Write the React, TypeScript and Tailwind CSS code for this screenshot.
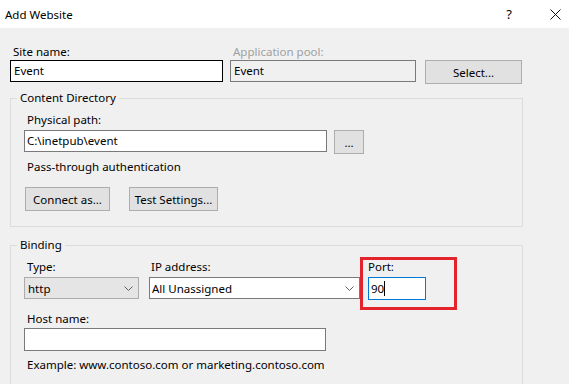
import React from 'react';

function Chevron() {
  return (
    <svg width="9" height="5" viewBox="0 0 9 5" fill="none" stroke="#606060" strokeWidth="1">
      <path d="M0.5 0.5 L4.5 4.5 L8.5 0.5" />
    </svg>
  );
}

function Button({ label, className }: { label: string; className: string }) {
  return (
    <div className={`h-[24px] bg-[#e1e1e1] border border-[#adadad] flex items-center justify-center ${className}`}>
      {label}
    </div>
  );
}

export default function App() {
  return (
    <div
      className="w-[569px] h-[384px] overflow-hidden flex flex-col bg-[#f0f0f0] text-black text-[11.5px] leading-[17px]"
      style={{ fontFamily: '"Noto Sans", "Open Sans", sans-serif' }}
    >
      {/* Title bar */}
      <div className="h-[28px] bg-white flex items-center pl-[5px] shrink-0">
        <span>Add Website</span>
        <span className="ml-auto text-[13px]">?</span>
        <svg className="ml-[38px] mr-[8px]" width="11" height="11" viewBox="0 0 11 11" stroke="#111" strokeWidth="1">
          <path d="M0.5 0.5 L10.5 10.5 M10.5 0.5 L0.5 10.5" />
        </svg>
      </div>

      <div className="pl-[10px] pt-[15px] w-[523px]">
        {/* Site name / app pool */}
        <div className="flex items-start">
          <div className="w-[213px]">
            <div className="h-[17px] pl-[3px]">Site name:</div>
            <div className="h-[22px] bg-white border border-black pl-[3px] leading-[20px]">Event</div>
          </div>
          <div className="w-[186px] ml-[7px]">
            <div className="h-[17px] pl-[3px] text-[#a0a0a0]">Application pool:</div>
            <div className="h-[22px] border border-[#7a7a7a] pl-[3px] leading-[20px]">Event</div>
          </div>
          <Button label="Select..." className="w-[97px] ml-[9px] mt-[17px]" />
        </div>

        {/* Content Directory */}
        <fieldset className="mt-[6px] border border-[#dcdcdc] px-[13px] pb-[15px]">
          <legend className="ml-[-7px] px-[3px] leading-[16px]">Content Directory</legend>
          <div className="mt-[5px] h-[17px] pl-[3px]">Physical path:</div>
          <div className="mt-[2px] flex items-start">
            <div className="w-[303px] h-[22px] bg-white border border-[#7a7a7a] pl-[2px] leading-[20px]">C:\inetpub\event</div>
            <Button label="..." className="w-[30px] ml-[7px]" />
          </div>
          <div className="mt-[4px] h-[17px] pl-[3px]">Pass-through authentication</div>
          <div className="mt-[12px] flex ml-[1px]">
            <Button label="Connect as..." className="w-[85px]" />
            <Button label="Test Settings..." className="w-[89px] ml-[19px]" />
          </div>
        </fieldset>

        {/* Binding */}
        <fieldset className="mt-[10px] border border-[#dcdcdc] border-b-0 px-[13px] pb-[20px]">
          <legend className="ml-[-7px] px-[3px] leading-[16px]">Binding</legend>
          <div className="mt-[5px] flex items-start">
            <div className="w-[115px]">
              <div className="h-[17px] pl-[3px]">Type:</div>
              <div className="mt-[2px] h-[22px] bg-[#e5e5e5] border border-[#acacac] flex items-center pl-[3px] pr-[5px]">
                <span>http</span>
                <span className="ml-auto"><Chevron /></span>
              </div>
            </div>
            <div className="w-[211px] ml-[10px]">
              <div className="h-[17px] pl-[2px]">IP address:</div>
              <div className="mt-[2px] h-[22px] bg-white border border-[#7a7a7a] flex items-center pl-[2px] pr-[5px]">
                <span>All Unassigned</span>
                <span className="ml-auto"><Chevron /></span>
              </div>
            </div>
            <div className="w-[58px] ml-[8px] relative">
              <div className="h-[17px]">Port:</div>
              <div className="mt-[2px] h-[23px] bg-white border border-[#0078d7] flex items-center pl-[2px]">
                <span>90</span>
                <span className="w-px h-[15px] bg-black" />
              </div>
              <div className="absolute left-[-8px] top-[-1px] w-[97px] h-[53px] border-[3px] border-[#e3242b]" />
            </div>
          </div>
          <div className="mt-[10px] h-[17px] pl-[3px]">Host name:</div>
          <div className="mt-[1px] w-[302px] h-[23px] bg-white border border-[#7a7a7a]" />
          <div className="mt-[5px] h-[17px] pl-[3px]">Example: www.contoso.com or marketing.contoso.com</div>
        </fieldset>
      </div>
    </div>
  );
}
